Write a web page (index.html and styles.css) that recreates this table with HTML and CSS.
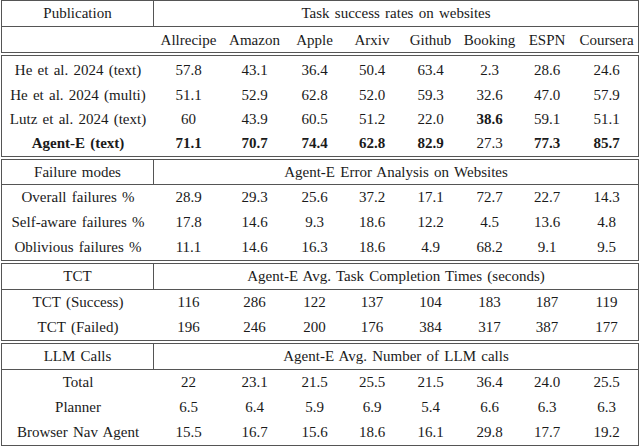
FILE: index.html
```html
<!DOCTYPE html>
<html>
<head>
<meta charset="utf-8">
<link rel="stylesheet" href="styles.css">
</head>
<body>
<div class="sheet">
  <table class="box">
    <colgroup><col class="c0"><col class="c1"><col class="c2"><col class="c3"><col class="c4"><col class="c5"><col class="c6"><col class="c7"><col class="c8"></colgroup>
    <tr class="hdr"><td class="sep">Publication</td><td colspan="8">Task success rates on websites</td></tr>
    <tr class="sites"><td></td><td>Allrecipe</td><td>Amazon</td><td>Apple</td><td>Arxiv</td><td>Github</td><td>Booking</td><td>ESPN</td><td>Coursera</td></tr>
  </table>
  <table class="box body4">
    <colgroup><col class="c0"><col class="c1"><col class="c2"><col class="c3"><col class="c4"><col class="c5"><col class="c6"><col class="c7"><col class="c8"></colgroup>
    <tr><td>He et al. 2024 (text)</td><td>57.8</td><td>43.1</td><td>36.4</td><td>50.4</td><td>63.4</td><td>2.3</td><td>28.6</td><td>24.6</td></tr>
    <tr><td>He et al. 2024 (multi)</td><td>51.1</td><td>52.9</td><td>62.8</td><td>52.0</td><td>59.3</td><td>32.6</td><td>47.0</td><td>57.9</td></tr>
    <tr><td>Lutz et al. 2024 (text)</td><td>60</td><td>43.9</td><td>60.5</td><td>51.2</td><td>22.0</td><td class="b">38.6</td><td>59.1</td><td>51.1</td></tr>
    <tr class="last"><td class="b">Agent-E (text)</td><td class="b">71.1</td><td class="b">70.7</td><td class="b">74.4</td><td class="b">62.8</td><td class="b">82.9</td><td>27.3</td><td class="b">77.3</td><td class="b">85.7</td></tr>
  </table>
  <table class="box">
    <colgroup><col class="c0"><col class="c1"><col class="c2"><col class="c3"><col class="c4"><col class="c5"><col class="c6"><col class="c7"><col class="c8"></colgroup>
    <tr class="hdr2"><td class="sep">Failure modes</td><td colspan="8">Agent-E Error Analysis on Websites</td></tr>
    <tr><td>Overall failures %</td><td>28.9</td><td>29.3</td><td>25.6</td><td>37.2</td><td>17.1</td><td>72.7</td><td>22.7</td><td>14.3</td></tr>
    <tr><td>Self-aware failures %</td><td>17.8</td><td>14.6</td><td>9.3</td><td>18.6</td><td>12.2</td><td>4.5</td><td>13.6</td><td>4.8</td></tr>
    <tr><td>Oblivious failures %</td><td>11.1</td><td>14.6</td><td>16.3</td><td>18.6</td><td>4.9</td><td>68.2</td><td>9.1</td><td>9.5</td></tr>
  </table>
  <table class="box">
    <colgroup><col class="c0"><col class="c1"><col class="c2"><col class="c3"><col class="c4"><col class="c5"><col class="c6"><col class="c7"><col class="c8"></colgroup>
    <tr class="hdr"><td class="sep">TCT</td><td colspan="8">Agent-E Avg. Task Completion Times (seconds)</td></tr>
    <tr><td>TCT (Success)</td><td>116</td><td>286</td><td>122</td><td>137</td><td>104</td><td>183</td><td>187</td><td>119</td></tr>
    <tr><td>TCT (Failed)</td><td>196</td><td>246</td><td>200</td><td>176</td><td>384</td><td>317</td><td>387</td><td>177</td></tr>
  </table>
  <table class="box">
    <colgroup><col class="c0"><col class="c1"><col class="c2"><col class="c3"><col class="c4"><col class="c5"><col class="c6"><col class="c7"><col class="c8"></colgroup>
    <tr class="hdr"><td class="sep">LLM Calls</td><td colspan="8">Agent-E Avg. Number of LLM calls</td></tr>
    <tr><td>Total</td><td>22</td><td>23.1</td><td>21.5</td><td>25.5</td><td>21.5</td><td>36.4</td><td>24.0</td><td>25.5</td></tr>
    <tr><td>Planner</td><td>6.5</td><td>6.4</td><td>5.9</td><td>6.9</td><td>5.4</td><td>6.6</td><td>6.3</td><td>6.3</td></tr>
    <tr><td>Browser Nav Agent</td><td>15.5</td><td>16.7</td><td>15.6</td><td>18.6</td><td>16.1</td><td>29.8</td><td>17.7</td><td>19.2</td></tr>
  </table>
</div>
</body>
</html>
```

FILE: styles.css
```css
html, body {
  margin: 0;
  padding: 0;
  background: #ffffff;
}
.sheet {
  width: 638px;
  margin-left: 1px;
  display: flex;
  flex-direction: column;
  gap: 2px;
  font-family: "Liberation Serif", "Times New Roman", serif;
  font-size: 15px;
  word-spacing: 1.5px;
  color: #1a1a1a;
}
.box {
  width: 638px;
  table-layout: fixed;
  border-collapse: separate;
  border-spacing: 0;
  border: 1px solid #555555;
}
.box td {
  padding: 0;
  height: 25px;
  text-align: center;
  vertical-align: middle;
  white-space: nowrap;
}
.box tr.hdr td, .box tr.hdr2 td {
  border-bottom: 1px solid #555555;
}
.box tr.hdr td { height: 25px; }
.box tr.hdr2 td { height: 24px; }
.box tr.sites td { height: 24px; padding-top: 1px; }
.box td.sep {
  border-right: 1px solid #555555;
}
.body4 td { height: 24px; }
.body4 tr:first-child td {
  height: 25px;
  padding-top: 2px;
}
.body4 tr.last td { height: 25px; }
.b { font-weight: bold; }
.c0 { width: 152px; }
.c1 { width: 69px; }
.c2 { width: 63px; }
.c3 { width: 57px; }
.c4 { width: 58px; }
.c5 { width: 59px; }
.c6 { width: 59px; }
.c7 { width: 56px; }
.c8 { width: 63px; }
```
